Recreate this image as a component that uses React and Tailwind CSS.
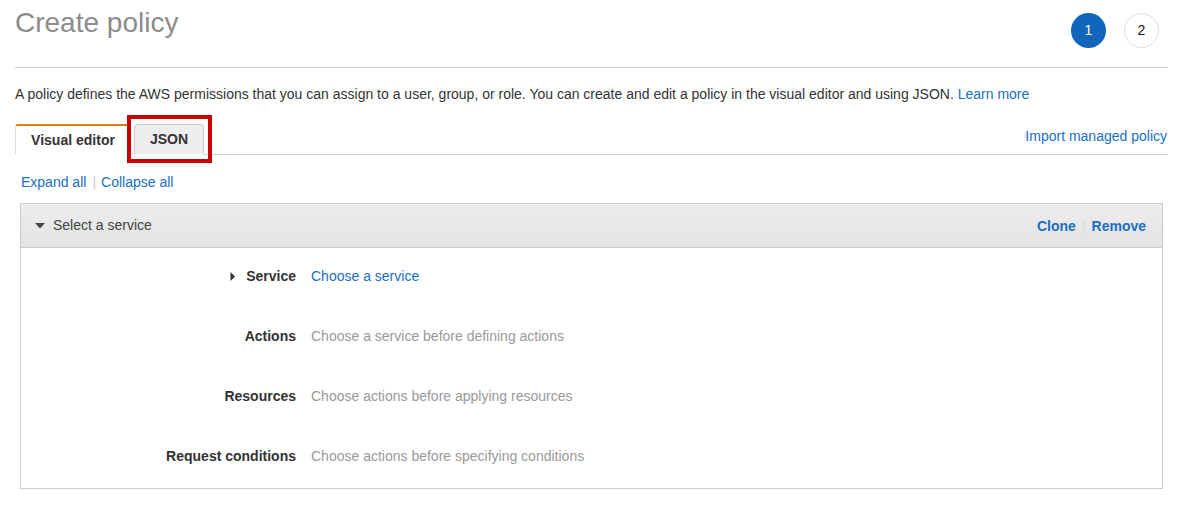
import React from "react";

export default function App() {
  const rows = [
    { label: "Service", value: "Choose a service", link: true, caret: true },
    { label: "Actions", value: "Choose a service before defining actions" },
    { label: "Resources", value: "Choose actions before applying resources" },
    { label: "Request conditions", value: "Choose actions before specifying conditions" },
  ];
  return (
    <div
      className="w-[1184px] h-[509px] bg-white overflow-hidden"
      style={{ fontFamily: '"Liberation Sans", Arial, sans-serif' }}
    >
      <div className="pl-[15px] pr-[16px]">
        {/* Header */}
        <div className="flex items-start justify-between h-[68px] border-b border-[#cccccc]">
          <h1 className="pt-[7px] text-[28px] leading-[32px] text-[#8c8c8c] font-normal">
            Create policy
          </h1>
          <div className="flex gap-[18px] mt-[13px] mr-[9px]">
            <div className="w-[35px] h-[35px] rounded-full bg-[#1166bb] text-white text-[14px] flex items-center justify-center">
              1
            </div>
            <div className="w-[35px] h-[35px] rounded-full border border-[#dddddd] text-[#111] text-[14px] flex items-center justify-center">
              2
            </div>
          </div>
        </div>

        {/* Description */}
        <p className="mt-[16px] text-[14px] leading-[20px] text-[#333]">
          A policy defines the AWS permissions that you can assign to a user, group, or role. You can create and edit a policy in the visual editor and using JSON.{" "}
          <span className="text-[#1a6fc0]">Learn more</span>
        </p>

        {/* Tabs */}
        <div className="mt-[20px] flex items-end h-[31px]">
          <div className="h-[31px] w-[113px] pl-[2px] border-t-2 border-l border-t-[#e07b10] border-l-[#dddddd] rounded-tl-[3px] flex items-center justify-center text-[14px] font-bold text-[#333]">
            Visual editor
          </div>
          <div className="relative ml-[6px] h-[31px] flex items-end">
            <div className="h-[30px] w-[70px] bg-[#eeeeee] border border-[#cccccc] border-b-0 rounded-t-[4px] flex items-center justify-center text-[14px] font-bold text-[#333] mb-[1px]">
              JSON
            </div>
            <div className="absolute left-[-7px] top-[-9px] w-[85px] h-[48px] border-[4px] border-[#cc0000] pointer-events-none" />
          </div>
          <div className="flex-1 h-[31px] border-b border-[#cccccc] flex justify-end items-start">
            <span className="mt-[2px] mr-[1px] text-[14px] leading-[20px] text-[#1a6fc0]">Import managed policy</span>
          </div>
        </div>

        {/* Expand / collapse */}
        <div className="mt-[17px] ml-[6px] flex items-center text-[14px] leading-[20px] text-[#1a6fc0]">
          <span>Expand all</span>
          <span className="ml-[6px] mr-[5px] text-[#cccccc]">|</span>
          <span>Collapse all</span>
        </div>

        {/* Panel */}
        <div className="mt-[11px] ml-[5px] w-[1143px] border border-[#cccccc]">
          <div className="h-[44px] bg-gradient-to-b from-[#eeeeee] to-[#e2e2e2] border-b border-[#cccccc] flex items-center justify-between pl-[14px] pr-[16px]">
            <div className="flex items-center text-[14px] text-[#444]">
              <svg width="10" height="6" viewBox="0 0 10 6" className="mr-[8px]">
                <path d="M0 0 L10 0 L5 5.5 Z" fill="#444" />
              </svg>
              Select a service
            </div>
            <div className="flex items-center text-[14px] font-bold text-[#1a6fc0] pt-[1px]">
              <span>Clone</span>
              <span className="mx-[6px] text-[#dddddd] font-normal">|</span>
              <span>Remove</span>
            </div>
          </div>
          <div className="pt-[18px] pb-[22px] flex flex-col gap-[40px]">
            {rows.map((r) => (
              <div key={r.label} className="flex items-center h-[20px] text-[14px]">
                <div className="w-[275px] flex justify-end items-center font-bold text-[#333]">
                  {r.caret && (
                    <svg width="6" height="9" viewBox="0 0 6 9" className="mr-[10px]">
                      <path d="M0.5 0 L5 4.5 L0.5 9 Z" fill="#333" />
                    </svg>
                  )}
                  {r.label}
                </div>
                <div className={"ml-[15px] " + (r.link ? "text-[#1a6fc0]" : "text-[#999999]")}>
                  {r.value}
                </div>
              </div>
            ))}
          </div>
        </div>
      </div>
    </div>
  );
}
